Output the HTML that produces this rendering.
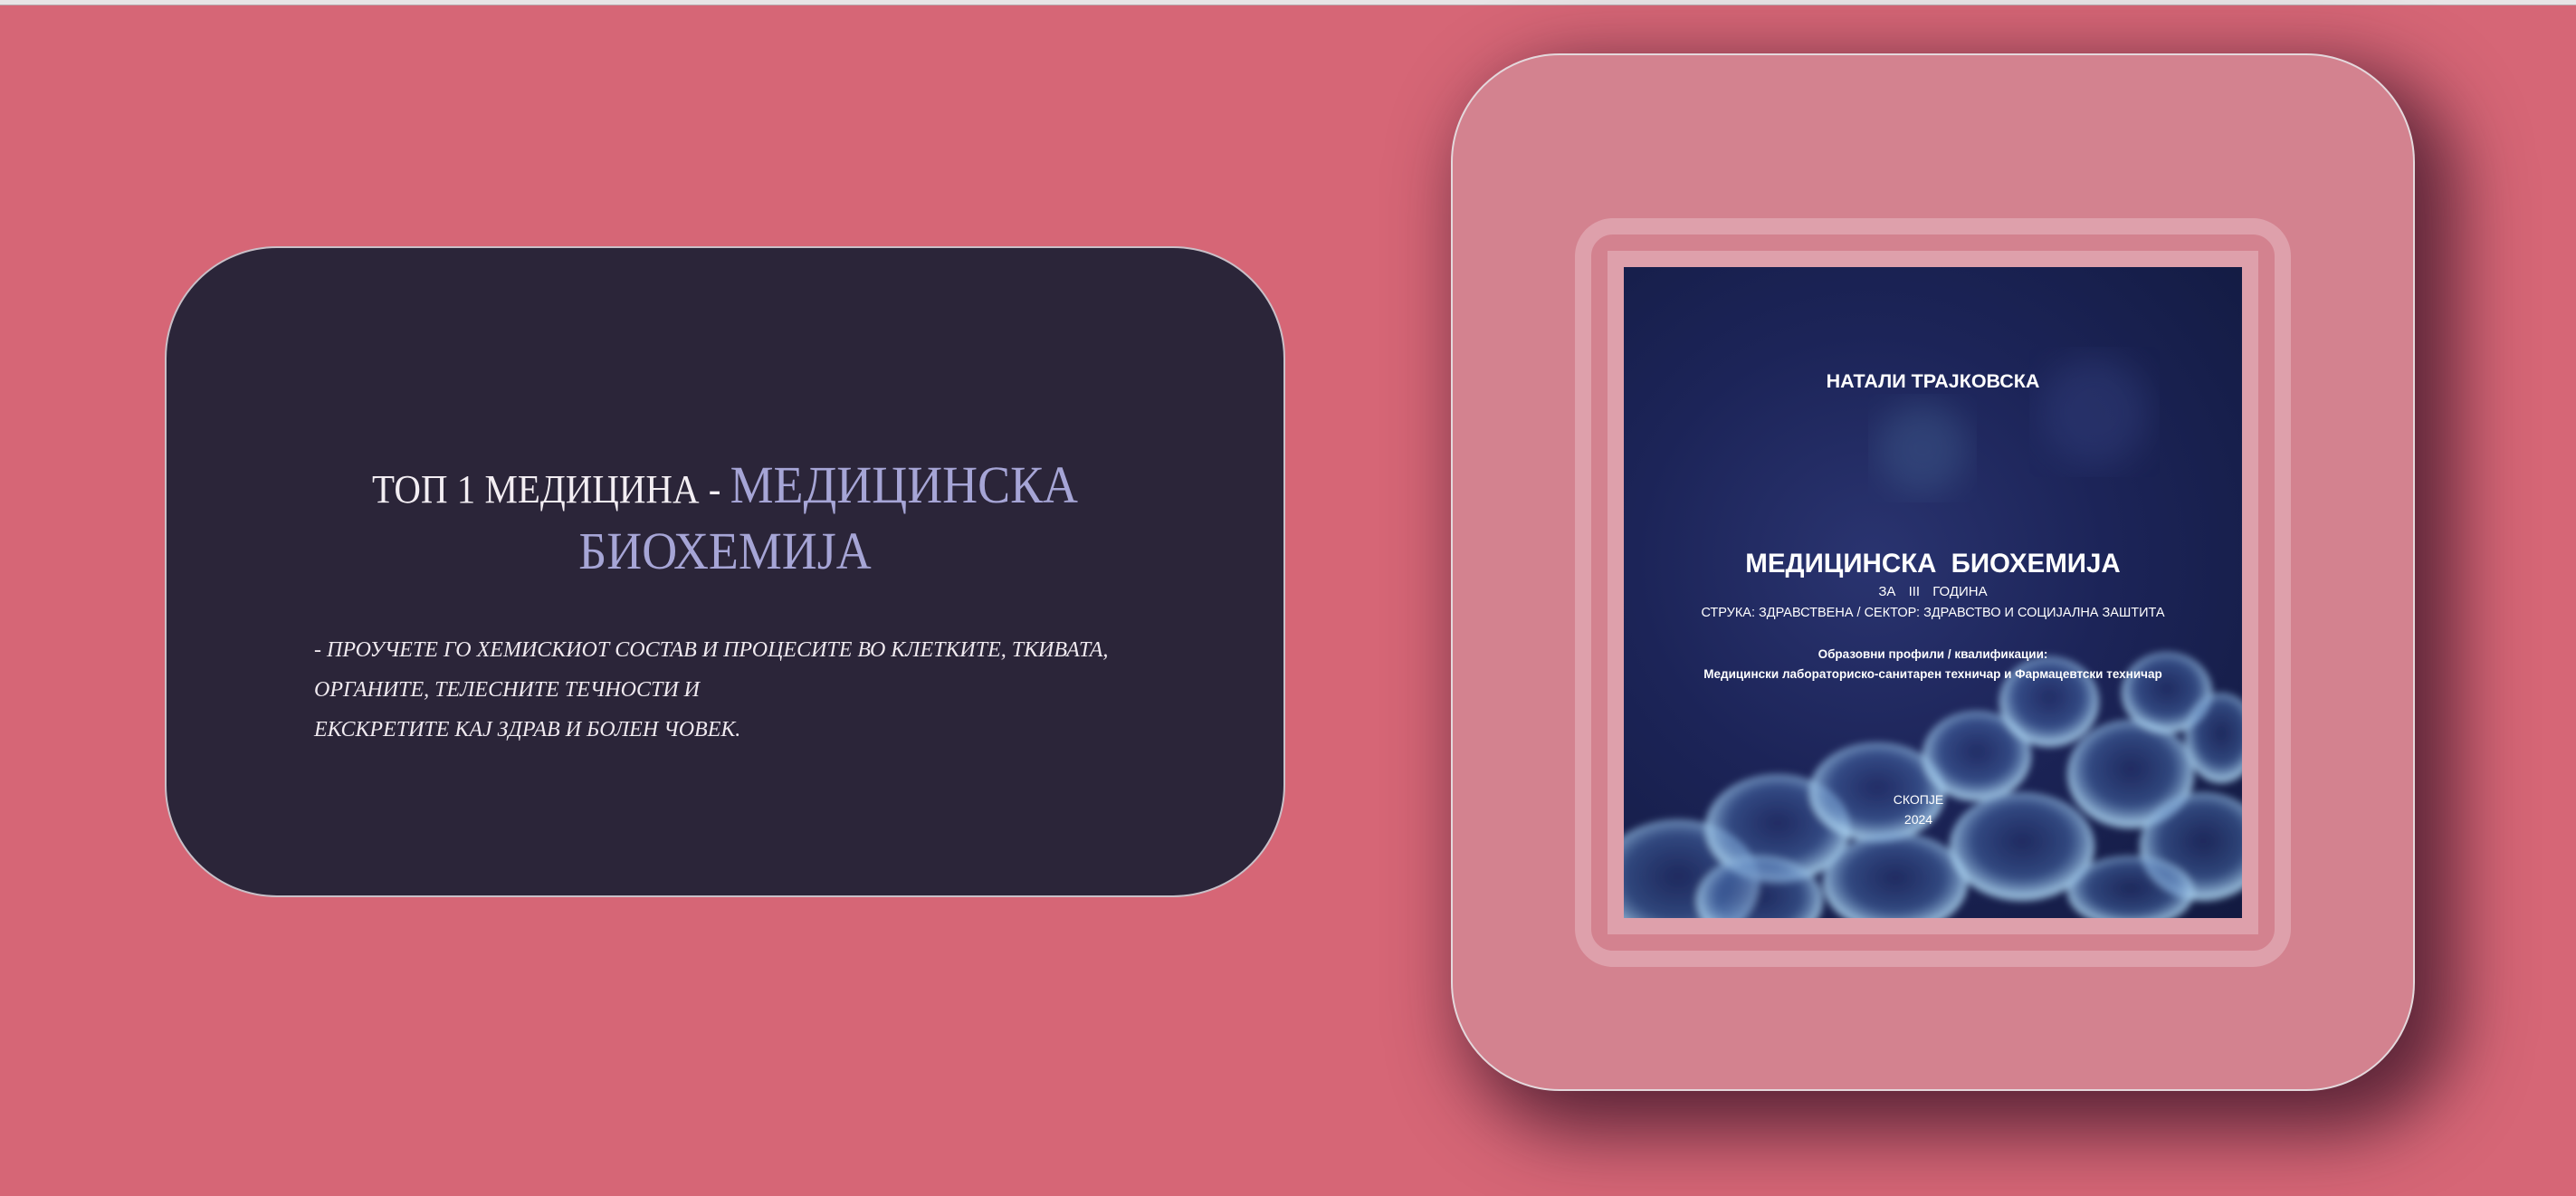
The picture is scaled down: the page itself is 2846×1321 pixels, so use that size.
<!DOCTYPE html>
<html><head><meta charset="utf-8"><style>
html,body{margin:0;padding:0}
body{width:2846px;height:1321px;background:#d66676;position:relative;overflow:hidden;font-family:"Liberation Serif",serif}
.top{position:absolute;left:0;top:0;width:2846px;height:5px;background:#e8e4e6;border-bottom:1px solid #b9a9ae}
.lc{position:absolute;left:182px;top:272px;width:1234px;height:715px;background:#2b2539;border:2px solid #c9c0c8;border-radius:124px}
.title{position:absolute;left:0;width:1234px;top:233px;text-align:center;line-height:58px;color:#f3eef3;transform:scaleX(0.93)}
.title .w{font-size:44px}
.title .p{font-size:58px;color:#a6a5d6}
.para{position:absolute;left:163px;top:422px;color:#f0eaf0;font-style:italic;text-transform:uppercase;font-size:24px;line-height:44px;white-space:nowrap}
.rc{position:absolute;left:1603px;top:59px;width:1061px;height:1142px;background:#d3828f;border:2px solid #e4d8dc;border-radius:120px;box-shadow:30px 30px 80px 15px rgba(60,20,40,.8)}
.f1{position:absolute;left:135px;top:180px;width:791px;height:827px;border:18px solid #dea0ab;border-radius:42px;box-sizing:border-box}
.f2{position:absolute;left:171px;top:216px;width:719px;height:755px;border:18px solid #dea0ab;box-sizing:border-box}
.cov{position:absolute;left:189px;top:234px;width:683px;height:719px;overflow:hidden;background:radial-gradient(ellipse at 40% 45%,#2a3470 0%,#1c2458 45%,#121a40 100%);font-family:"Liberation Sans",sans-serif;color:#fff;text-align:center}
.cov div{position:absolute;left:0;width:683px}
</style></head><body>
<div class="top"></div>
<div class="lc">
 <div class="title"><span class="w">ТОП 1 МЕДИЦИНА - </span><span class="p">МЕДИЦИНСКА<br>БИОХЕМИЈА</span></div>
 <div class="para">- Проучете го хемискиот состав и процесите во клетките, ткивата,<br>органите, телесните течности и<br>екскретите кај здрав и болен човек.</div>
</div>
<div class="rc">
 <div class="f1"></div>
 <div class="f2"></div>
 <div class="cov">
  <svg width="683" height="719" style="position:absolute;left:0;top:0">
   <defs>
    <radialGradient id="b" cx="50%" cy="45%" r="50%">
     <stop offset="0%" stop-color="#2a3a7a" stop-opacity=".4"/>
     <stop offset="65%" stop-color="#4a70b0" stop-opacity=".5"/>
     <stop offset="100%" stop-color="#a8d0ee" stop-opacity=".85"/>
    </radialGradient>
    <filter id="bl"><feGaussianBlur stdDeviation="4"/></filter>
    <filter id="bl2"><feGaussianBlur stdDeviation="18"/></filter>
   </defs>
   <circle cx="330" cy="200" r="50" fill="#4a6a9a" opacity=".35" filter="url(#bl2)"/>
   <circle cx="520" cy="160" r="60" fill="#3a4a8a" opacity=".35" filter="url(#bl2)"/>
   <g filter="url(#bl)">
    <ellipse cx="60" cy="680" rx="90" ry="70" fill="url(#b)"/>
    <ellipse cx="170" cy="620" rx="80" ry="60" fill="url(#b)"/>
    <ellipse cx="150" cy="700" rx="70" ry="50" fill="url(#b)"/>
    <ellipse cx="280" cy="580" rx="75" ry="55" fill="url(#b)"/>
    <ellipse cx="300" cy="680" rx="80" ry="55" fill="url(#b)"/>
    <ellipse cx="390" cy="540" rx="60" ry="50" fill="url(#b)"/>
    <ellipse cx="440" cy="640" rx="80" ry="60" fill="url(#b)"/>
    <ellipse cx="470" cy="480" rx="55" ry="50" fill="url(#b)"/>
    <ellipse cx="560" cy="560" rx="70" ry="60" fill="url(#b)"/>
    <ellipse cx="600" cy="470" rx="50" ry="45" fill="url(#b)"/>
    <ellipse cx="640" cy="640" rx="70" ry="60" fill="url(#b)"/>
    <ellipse cx="560" cy="690" rx="70" ry="40" fill="url(#b)"/>
    <ellipse cx="660" cy="520" rx="40" ry="50" fill="url(#b)"/>
   </g>
  </svg>
  <div style="top:114px;font-size:21.5px;font-weight:bold">НАТАЛИ ТРАЈКОВСКА</div>
  <div style="top:311px;font-size:29.5px;font-weight:bold;word-spacing:8px">МЕДИЦИНСКА БИОХЕМИЈА</div>
  <div style="top:350px;font-size:15px;word-spacing:10px">ЗА III ГОДИНА</div>
  <div style="top:374px;font-size:14.5px">СТРУКА: ЗДРАВСТВЕНА / СЕКТОР: ЗДРАВСТВО И СОЦИЈАЛНА ЗАШТИТА</div>
  <div style="top:420px;font-size:13.5px;font-weight:bold">Образовни профили / квалификации:</div>
  <div style="top:442px;font-size:13.5px;font-weight:bold">Медицински лабораториско-санитарен техничар и Фармацевтски техничар</div>
  <div style="top:580px;font-size:14px;left:-16px">СКОПЈЕ</div>
  <div style="top:602px;font-size:14px;left:-16px">2024</div>
 </div>
</div>
</body></html>
